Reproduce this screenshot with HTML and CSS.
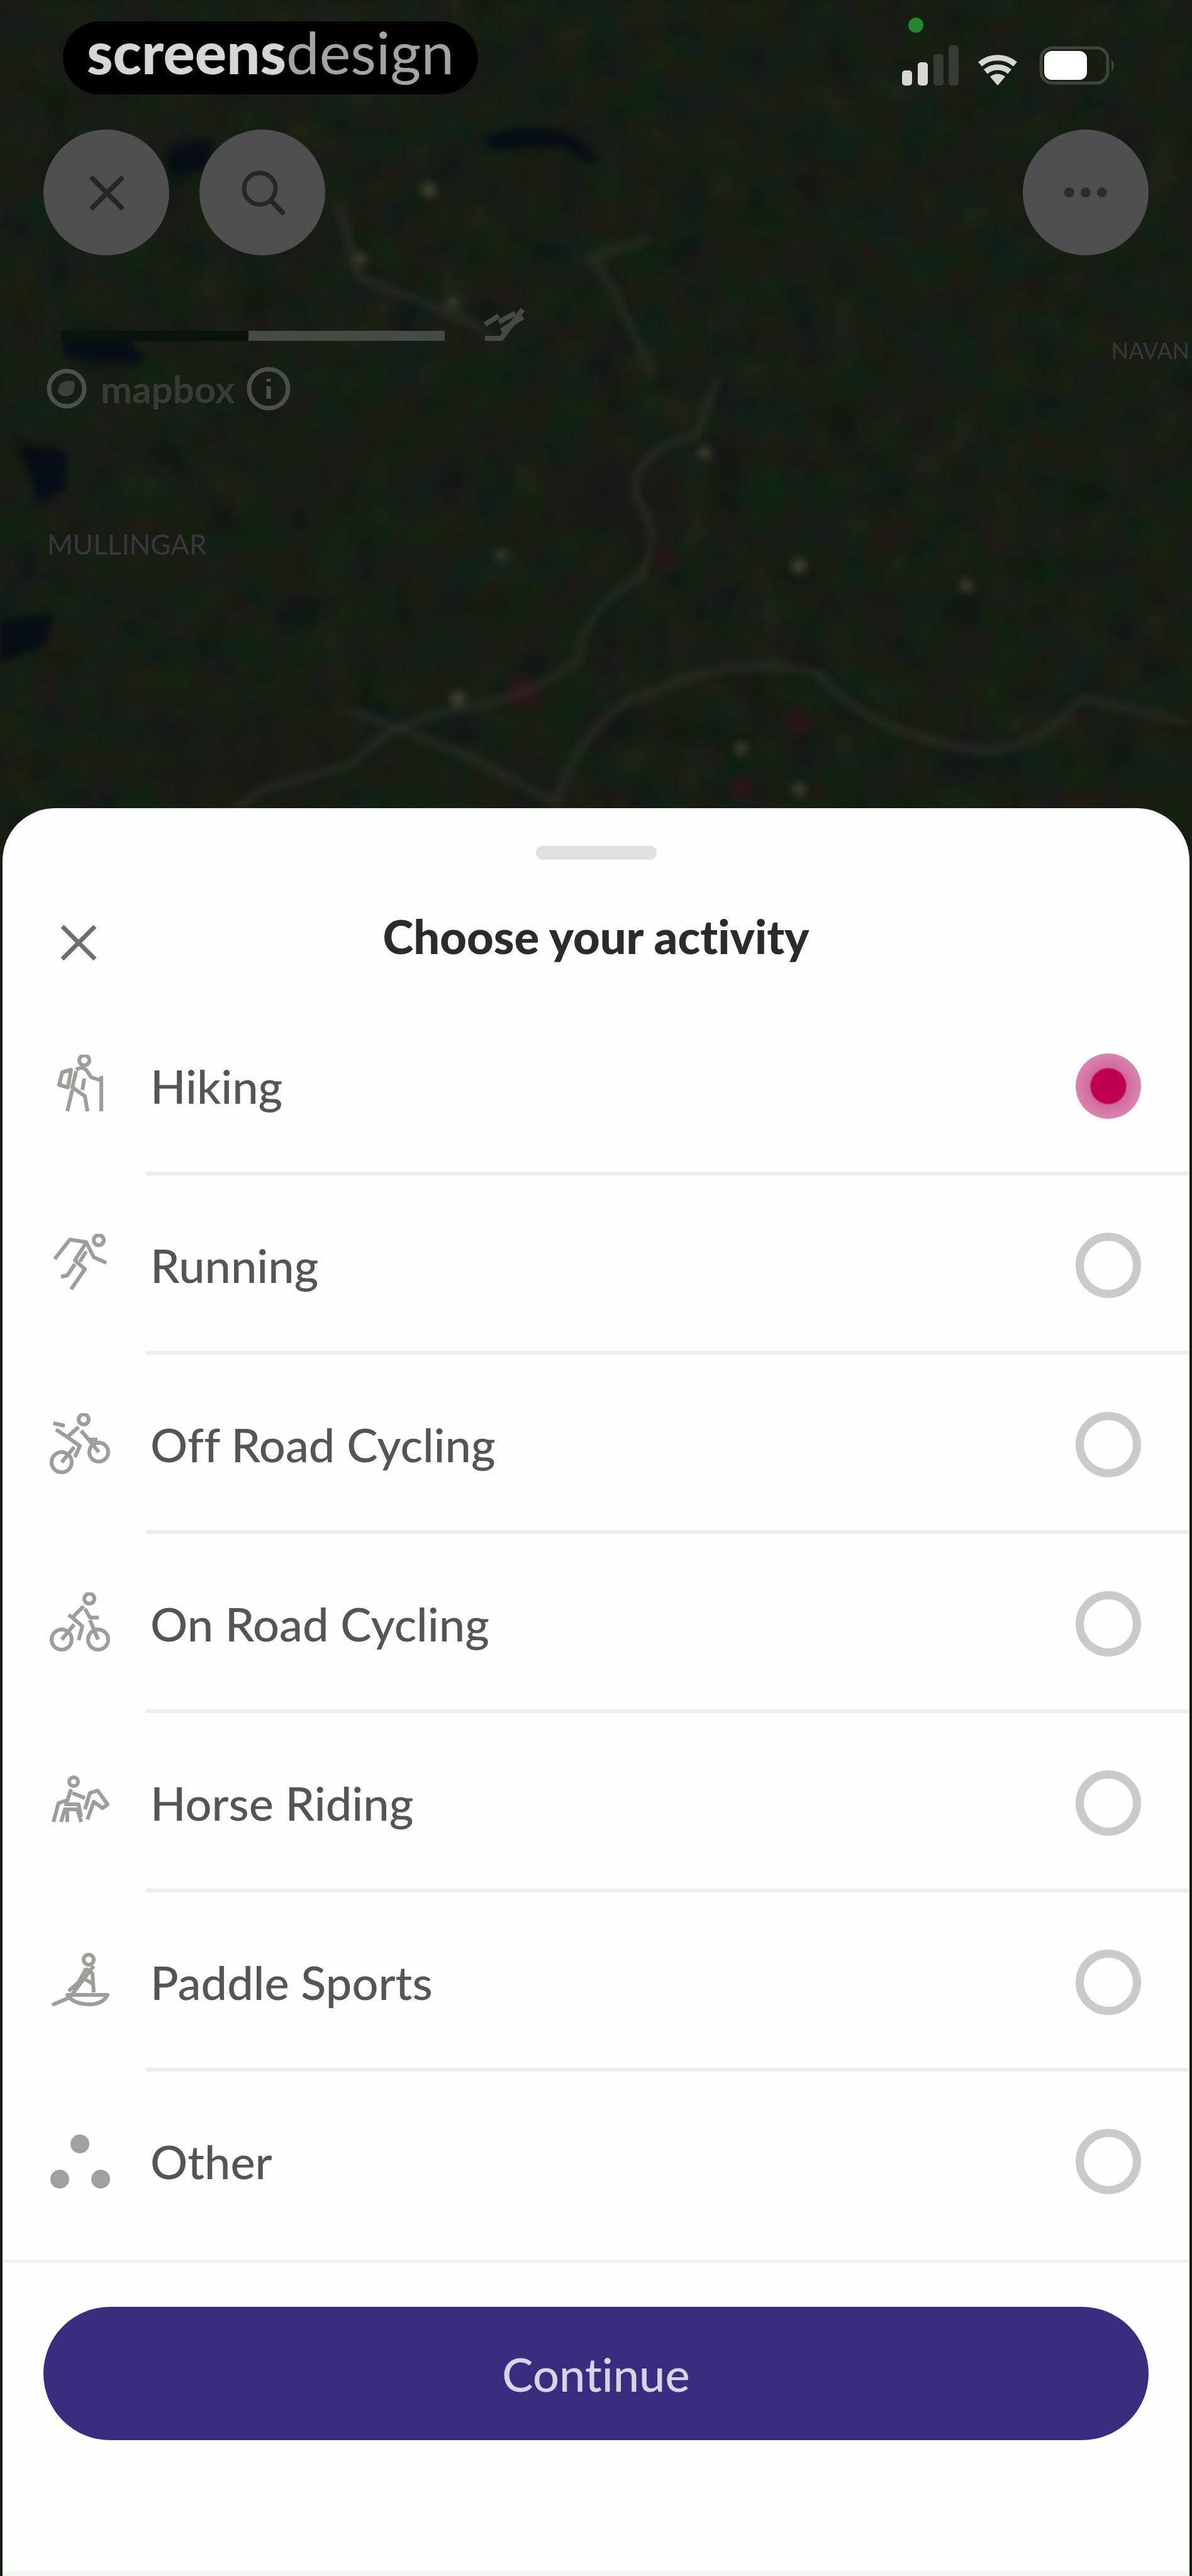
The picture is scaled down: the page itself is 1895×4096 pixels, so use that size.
FILE: index.html
```html
<!DOCTYPE html>
<html lang="en">
<head>
<meta charset="utf-8">
<meta name="viewport" content="width=device-width, initial-scale=1">
<title>Choose your activity</title>
<link rel="stylesheet" href="styles.css">
</head>
<body>
<div class="screen">
  <svg class="terrain" viewBox="0 0 1895 1400" preserveAspectRatio="xMidYMin slice" aria-hidden="true">
    <defs>
      <filter id="fields" x="0" y="0" width="100%" height="100%" color-interpolation-filters="sRGB">
        <feTurbulence type="fractalNoise" baseFrequency="0.016" numOctaves="3" seed="7"/>
        <feColorMatrix values="0.1 0 0 0 0.035  0 0.07 0 0 0.08  0 0 0.06 0 0.045  0 0 0 0 1"/>
      </filter>
      <filter id="soft" color-interpolation-filters="sRGB"><feGaussianBlur stdDeviation="7"/></filter>
    </defs>
    <rect width="1895" height="1400" fill="#161e14"/>
    <rect width="1895" height="1400" filter="url(#fields)"/>
    <g filter="url(#soft)">
      <g fill="#070d14">
        <path d="M775 215q60-20 110-8 50 15 68 55-30-5-50-28-60 0-128 6z"/>
        <path d="M262 245q40-25 80-22l-15 45-55 15z"/>
        <path d="M98 540q60-15 110 0l25 38q-60-5-128-8z"/>
        <path d="M28 705l80 15-5 60-40 22z"/>
        <path d="M0 985l85-10-12 50-73 30z"/>
      </g>
      <g fill="#1b1815" opacity="0.6">
        <path d="M870 740l200-20 30 110-60 70-70-60-95 10z"/>
        <path d="M240 1240l150-80 160-20-20 100-160 50z"/>
      </g>
      <g fill="#2a1616">
        <circle cx="832" cy="1100" r="26"/><circle cx="1268" cy="1148" r="20"/><circle cx="1178" cy="1250" r="18"/><circle cx="1060" cy="890" r="16"/>
      </g>
      <g fill="#41422f">
        <circle cx="682" cy="302" r="12"/><circle cx="572" cy="412" r="10"/><circle cx="798" cy="882" r="9"/><circle cx="1270" cy="900" r="12"/>
        <circle cx="1536" cy="932" r="10"/><circle cx="728" cy="1110" r="12"/><circle cx="1178" cy="1190" r="10"/><circle cx="1270" cy="1255" r="10"/><circle cx="720" cy="480" r="9"/><circle cx="1120" cy="720" r="10"/>
      </g>
      <g fill="none" stroke="#30322e" stroke-width="7">
        <path d="M1140 600l-30 90q-110 30-100 100 50 60 5 130-90 50-95 130-80 60-180 75-120 20-180 90l-140 40-180 120"/>
        <path d="M560 1130l180 70 150 80M880 1280q60-160 160-180 120-60 260-30 70 90 240 120 90 20 180-80l170 40"/>
        <path d="M540 330l30 110 130 50 80 40"/>
        <path d="M1040 600l-60-130-40-60 90-30"/>
      </g>
    </g>
  </svg>

  <header class="map">
    <div class="status">
      <div class="brand"><strong>screens</strong>design</div>
      <svg class="status-icons" viewBox="0 0 360 120" role="img" aria-label="Signal, Wi-Fi and battery">
        <circle cx="37" cy="16" r="12" fill="#25852f"/>
        <g fill="#d4d7d2"><rect x="15" y="88" width="16" height="24" rx="5"/><rect x="40" y="75" width="16" height="37" rx="5"/></g>
        <g fill="#343c33"><rect x="65" y="62" width="16" height="50" rx="5"/><rect x="89" y="48" width="16" height="64" rx="5"/></g>
        <path d="M167 112l-12-14a18 18 0 0 1 24 0z" fill="#d4d7d2"/>
        <path d="M148 90a29 29 0 0 1 38 0M139 78a43 43 0 0 1 56 0" fill="none" stroke="#d4d7d2" stroke-width="9"/>
        <rect x="236" y="52" width="106" height="56" rx="18" fill="none" stroke="#3b4538" stroke-width="5"/>
        <path d="M348 70q8 10 0 20z" fill="#3b4538"/>
        <rect x="241" y="57" width="68" height="46" rx="12" fill="#fff"/>
      </svg>
    </div>

    <nav class="tools" aria-label="Map controls">
      <button class="round" type="button" aria-label="Close map"><svg viewBox="0 0 200 200"><path d="M78 78l46 46M124 78l-46 46" stroke-width="8"/></svg></button>
      <button class="round" type="button" aria-label="Search"><svg viewBox="0 0 200 200"><circle cx="96" cy="94" r="25" stroke-width="7"/><path d="M114 113l18 19" stroke-width="8"/></svg></button>
      <button class="round round-end" type="button" aria-label="More"><svg viewBox="0 0 200 200"><g class="solid"><circle cx="74" cy="100" r="8"/><circle cx="100" cy="100" r="8"/><circle cx="126" cy="100" r="8"/></g></svg></button>
    </nav>

    <div class="scale" aria-hidden="true">
      <span class="scale-dark"></span><span class="scale-light"></span>
      <svg viewBox="0 0 80 64"><path d="M8 30l22-14M8 52h26l34-46M30 26l26-14M34 40l34-22" /></svg>
    </div>
    <div class="credit">
      <svg viewBox="0 0 72 72" aria-hidden="true"><circle cx="36" cy="36" r="28"/><path d="M22 42q0-22 26-18 4 24-14 24-8 0-12-6z" class="solid"/></svg>
      <span>mapbox</span>
      <svg viewBox="0 0 72 72" role="img" aria-label="Map information"><circle cx="36" cy="36" r="31"/><path d="M36 32v20M36 20v5"/></svg>
    </div>
    <span class="place mullingar">MULLINGAR</span>
    <span class="place navan">NAVAN</span>
  </header>

  <main class="sheet">
    <div class="handle"></div>
    <div class="sheet-head">
      <button class="dismiss" type="button" aria-label="Close"><svg viewBox="0 0 64 64"><path d="M6 6l52 52M58 6L6 58"/></svg></button>
      <h1>Choose your activity</h1>
    </div>

    <form class="form">
      <div class="options" role="radiogroup" aria-label="Activity">
        <label class="option">
          <svg viewBox="0 0 100 100"><circle cx="57" cy="9" r="8"/><path d="M44 24q8-6 16 0l8 12 16 5M44 26l-6 26 20 14 4 24M38 56l-8 34M57 38l-3 18M36 24l-14 4-5 20 14 4zM84 34v56"/></svg>
          <span>Hiking</span><input type="radio" name="activity" checked>
        </label>
        <label class="option">
          <svg viewBox="0 0 100 100"><circle cx="80" cy="10" r="8"/><path d="M10 40L34 9l26 4 12 24 20 9M60 14L42 42l16 14-22 32M60 28L50 44M42 48L30 66l-10 2"/></svg>
          <span>Running</span><input type="radio" name="activity">
        </label>
        <label class="option">
          <svg viewBox="0 0 100 100"><circle cx="21" cy="78" r="16"/><circle cx="80" cy="62" r="15"/><circle cx="56" cy="10" r="8"/><path d="M8 16l18 4M48 22L30 38l20 14-8 18M52 28l12 14h14M30 38l-18-12M21 78l20-24M64 42l16 20"/></svg>
          <span>Off Road Cycling</span><input type="radio" name="activity">
        </label>
        <label class="option">
          <svg viewBox="0 0 100 100"><circle cx="21" cy="75" r="16"/><circle cx="79" cy="75" r="16"/><circle cx="65" cy="10" r="8"/><path d="M56 22L38 40l16 14-6 22M58 26l8 14h14M21 75l20-24M66 44l13 31M38 40l-6-4"/></svg>
          <span>On Road Cycling</span><input type="radio" name="activity">
        </label>
        <label class="option">
          <svg viewBox="0 0 100 100"><circle cx="40" cy="16" r="7"/><path d="M36 28l-8 24h20l4 20M38 34l20 8M8 80l8-30 12-4M20 80l6-20h20l6 20M30 80V62M58 60l8-26 12-4 16 22-8 6-14-10-10 28"/></svg>
          <span>Horse Riding</span><input type="radio" name="activity">
        </label>
        <label class="option">
          <svg viewBox="0 0 100 100"><circle cx="64" cy="14" r="8"/><path d="M60 28L48 50l-16 14M60 28l10 8 2 30M56 44l14 8M6 86l28-12 38-50M30 70h64q-8 15-28 15-26 0-36-15z"/></svg>
          <span>Paddle Sports</span><input type="radio" name="activity">
        </label>
        <label class="option">
          <svg viewBox="0 0 100 100"><g class="solid"><circle cx="50" cy="22" r="15"/><circle cx="18" cy="78" r="15"/><circle cx="83" cy="78" r="15"/></g></svg>
          <span>Other</span><input type="radio" name="activity">
        </label>
      </div>
      <div class="actions"><button class="continue" type="submit">Continue</button></div>
    </form>
  </main>
</div>
</body>
</html>
```

FILE: styles.css
```css
* { box-sizing: border-box; }

body {
  margin: 0;
  background: #161e14;
  font-family: Lato, "Liberation Sans", sans-serif;
  font-variant-ligatures: none;
}

button { border: 0; padding: 0; font: inherit; }
svg { display: block; fill: none; }

.screen {
  position: relative;
  display: flex;
  flex-direction: column;
  min-height: 100vh;
  overflow: hidden;
}

.terrain {
  position: absolute;
  top: 0;
  left: 0;
  width: 100%;
  height: 1400px;
}

/* Map area */
.map {
  position: relative;
  min-height: 1285px;
  padding-top: 24px;
}

.status {
  display: flex;
  align-items: flex-start;
  justify-content: space-between;
  padding: 0 68px 0 100px;
  height: 182px;
}

.brand {
  margin-top: 10px;
  padding: 0 38px;
  height: 116px;
  border-radius: 58px;
  background: #000;
  color: #a3a3a3;
  font-size: 94px;
  line-height: 96px;
}

.brand strong { color: #d6d6d6; font-weight: 900; }

.status-icons { width: 360px; height: 120px; margin-right: 48px; }

.tools { display: flex; gap: 48px; padding: 0 69px; }

.round {
  width: 200px;
  height: 200px;
  border-radius: 50%;
  background: #4f4f4f;
}

.round-end { margin-left: auto; }
.round svg { stroke: #262626; stroke-linecap: round; }
.round .solid { fill: #2c2c2c; stroke: none; }

.scale {
  display: flex;
  align-items: center;
  height: 64px;
  margin: 96px 0 0 97px;
}

.scale-dark { width: 298px; height: 16px; background: #0a130b; }
.scale-light { width: 312px; height: 16px; background: #454a44; }
.scale svg { align-self: flex-start; width: 80px; height: 64px; margin: -16px 0 0 56px; stroke: #454a44; stroke-width: 8; }

.credit {
  display: flex;
  align-items: center;
  gap: 18px;
  margin: 12px 0 0 70px;
  color: #363b36;
  font-size: 60px;
  font-weight: 700;
  line-height: 80px;
}

.credit svg { width: 72px; height: 72px; stroke: #4c504c; stroke-width: 7; }
.credit .solid { fill: #3b403b; stroke: none; }

.place {
  position: absolute;
  color: #3a373b;
  line-height: 48px;
  white-space: nowrap;
}

.mullingar { left: 75px; top: 841px; font-size: 44px; }
.navan { right: 4px; top: 533px; font-size: 36px; }

/* Bottom sheet */
.sheet {
  position: relative;
  flex: 1;
  margin: 0 4px;
  padding-top: 60px;
  border-bottom: 8px solid #f1fbef;
  border-radius: 84px 84px 0 0;
  background: #fefefe;
}

.handle {
  width: 192px;
  height: 22px;
  margin: 0 auto;
  border-radius: 11px;
  background: #e0e0e0;
}

.sheet-head {
  display: grid;
  grid-template-columns: 64px 1fr 64px;
  align-items: start;
  padding: 74px 89px 0;
  height: 217px;
}

.dismiss { width: 64px; height: 64px; margin-top: 26px; background: none; }
.dismiss svg { stroke: #6f6f6d; stroke-width: 7; }

h1 {
  margin: 0;
  color: #2b2b2b;
  font-size: 74px;
  font-weight: 900;
  line-height: 96px;
  text-align: center;
}

.option {
  position: relative;
  display: flex;
  align-items: center;
  height: 285px;
  padding: 0 77px 0 73px;
  color: #555;
  font-size: 74px;
  font-weight: 500;
}

.option:not(:last-child)::after {
  content: "";
  position: absolute;
  right: 0;
  bottom: 0;
  left: 228px;
  height: 6px;
  background: #ededed;
}

.option svg {
  width: 100px;
  height: 100px;
  margin-right: 62px;
  stroke: #a09c99;
  stroke-width: 6;
  stroke-linejoin: round;
}

.option .solid { fill: #a39f9c; stroke: none; }

.option input {
  appearance: none;
  width: 104px;
  height: 104px;
  margin: 0 0 0 auto;
  border: 13px solid #cbcac8;
  border-radius: 50%;
}

.option input:checked {
  border: 0;
  background: radial-gradient(circle, #be004f 27px, #d26a9f 30px, #d883ae 50px);
}

.actions {
  margin-top: 14px;
  padding: 70px 65px 205px;
  border-top: 5px solid #f3f3f3;
}

.continue {
  display: block;
  width: 100%;
  height: 212px;
  border-radius: 106px;
  background: #3c2c80;
  color: #d8d3e6;
  font-size: 74px;
  font-weight: 500;
}
```
